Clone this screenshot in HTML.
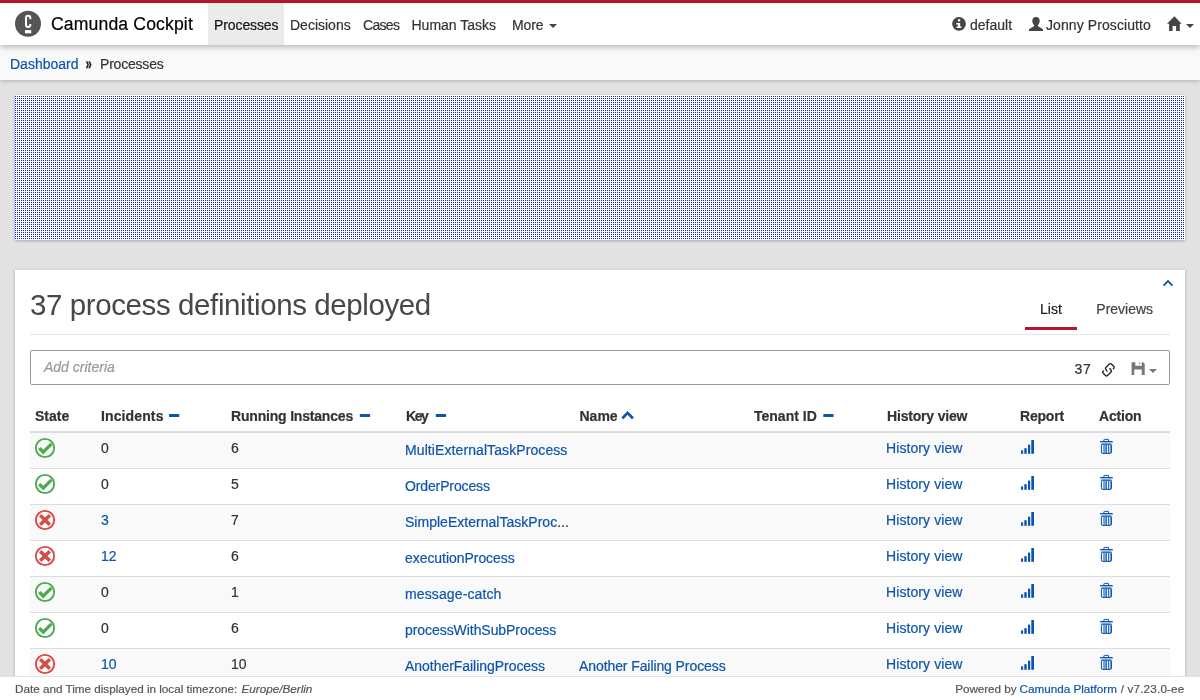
<!DOCTYPE html>
<html lang="en">
<head>
<meta charset="utf-8">
<title>Camunda Cockpit | Processes</title>
<style>
*{box-sizing:border-box}
html,body{margin:0;padding:0}
body{-webkit-text-stroke:.2px;will-change:transform;width:1200px;height:700px;overflow:hidden;position:relative;background:#e2e2e2;
 font-family:"Liberation Sans",sans-serif;font-size:14px;line-height:20px;color:#333}
a{color:#0d55ac;text-decoration:none}
/* header */
#hdr{position:absolute;left:0;top:0;width:1200px;height:45px;background:#fff;border-top:3px solid #b5152b;
 box-shadow:0 2px 6px rgba(0,0,0,.28);z-index:5}
#hicons{position:absolute;left:0;top:-3px}
#brand{position:absolute;left:51px;top:0;height:42px;line-height:42px;font-size:17.6px;letter-spacing:.14px;color:#000;white-space:nowrap}
.nav{position:absolute;top:0;height:42px;line-height:44px;color:#333;white-space:nowrap}
.nav.on{background:#ebebeb;color:#111}
/* breadcrumb */
#crumb{position:absolute;left:0;top:45px;width:1200px;height:35px;background:#f9f9f9;
 box-shadow:0 1px 4px rgba(0,0,0,.22);z-index:4}
#crumb span,#crumb a{position:absolute;top:0;line-height:39px;white-space:nowrap}
/* dotted box */
#dots{position:absolute;left:15px;top:95px;width:1170px;height:145px;background:
 linear-gradient(90deg,transparent 50%,#fff 50%) 0 0/2px 2px,
 linear-gradient(180deg,#fff 50%,transparent 50%) 0 0/2px 2px,
 #0a1eff;
 box-shadow:0 1px 3px rgba(0,0,0,.25)}
/* panel */
#panel{position:absolute;left:15px;top:270px;width:1170px;height:440px;background:#fff;
 box-shadow:0 1px 3px rgba(0,0,0,.25)}
h1{position:absolute;left:15px;top:13px;margin:0;font-weight:normal;font-size:29.5px;line-height:44px;letter-spacing:-.4px;color:#484848;-webkit-text-stroke:0;white-space:nowrap}
#hr{position:absolute;left:15px;top:64px;width:1140px;height:1px;background:#e6e6e6}
.tab{position:absolute;top:27px;line-height:24px;white-space:nowrap}
#tabline{position:absolute;left:1010px;top:57px;width:52px;height:3px;background:#b5152b}
#search{position:absolute;left:15px;top:80px;width:1140px;height:35px;border:1px solid #999;border-radius:2px;background:#fff}
#search .ph{position:absolute;left:13px;top:0;line-height:32px;font-style:italic;color:#999;white-space:nowrap}
#search .cnt{position:absolute;left:1043.5px;top:1px;line-height:34px;letter-spacing:.8px;color:#333}
table{position:absolute;left:15px;top:128px;width:1140px;border-collapse:separate;border-spacing:0;table-layout:fixed}
th{height:35px;padding:8px 0 0 5px;text-align:left;font-weight:bold;color:#333;border-bottom:2px solid #ddd;white-space:nowrap;vertical-align:top;line-height:20px}
td{height:36px;padding:5px 0 0 5px;border-top:1px solid #ddd;vertical-align:top;line-height:20px;white-space:nowrap;overflow:hidden;position:relative}
tbody tr:first-child td{border-top:0;height:35px}
tbody tr:nth-child(odd) td{background:#f9f9f9}
td.k{padding-top:7px}
td.h{letter-spacing:.09px}
#picons{position:absolute;left:0;top:0;z-index:2;pointer-events:none}
/* footer */
#ftr{position:absolute;left:0;top:676px;width:1200px;height:24px;background:#fff;border-top:1px solid #e4e4e4;z-index:6;font-size:11.7px;color:#555}
#ftr span{position:absolute;top:0;line-height:23px;white-space:nowrap}
</style>
</head>
<body>

<div id="hdr">
  <svg id="hicons" width="1200" height="45" viewBox="0 0 1200 45">
    <circle cx="28" cy="23.7" r="13" fill="#555"/>
    <path d="M30.3 19.3V17.7Q30.3 15.7 28.15 15.7Q26 15.7 26 17.7V25.1Q26 27.1 28.15 27.1Q30.3 27.1 30.3 25.1V23.9" fill="none" stroke="#fff" stroke-width="2"/>
    <rect x="25" y="30.1" width="6.3" height="3.2" fill="#fff"/>
    <g fill="#444">
      <circle cx="959" cy="23.8" r="6.85"/>
      <path d="M1036 16.9c2.3 0 3.7 1.6 3.7 3.9 0 1.9-.8 3.6-1.9 4.4v.9l5.2 3.1v1.8h-14v-1.8l5.2-3.1v-.9c-1.1-.8-1.9-2.5-1.9-4.4 0-2.3 1.4-3.9 3.7-3.9z"/>
      <path d="M1174.4 16.3l7.2 7.4h-1.8v7.2h-3.7v-5h-3.5v5h-3.5v-7.2h-2.1z"/>
      <path d="M549 24h8l-4 4z"/>
      <path d="M1186 24h8l-4 4z"/>
    </g>
    <g fill="#fff">
      <rect x="957.9" y="19.2" width="2.3" height="2.2"/>
      <path d="M956.3 23.1h3.9v3.5h1.2v1.5h-4.8v-1.5h1.3v-2h-1.6z"/>
    </g>
  </svg>
  <div id="brand">Camunda Cockpit</div>
  <div class="nav on" style="left:208px;width:76px;padding-left:6px;letter-spacing:-.1px">Processes</div>
  <div class="nav" style="left:290px">Decisions</div>
  <div class="nav" style="left:363px;letter-spacing:-.7px">Cases</div>
  <div class="nav" style="left:411.5px">Human Tasks</div>
  <div class="nav" style="left:512px;letter-spacing:-.15px">More</div>
  <div class="nav" style="left:970px">default</div>
  <div class="nav" style="left:1046px;letter-spacing:.09px">Jonny Prosciutto</div>
</div>

<div id="crumb">
  <a style="left:10px">Dashboard</a><span style="left:85.3px;font-size:13px;font-weight:bold;color:#111;top:-1.2px;transform:scale(.88,1.3)">»</span><span style="left:100px;letter-spacing:-.2px">Processes</span>
</div>

<div id="dots"></div>

<div id="panel">
  <svg id="picons" width="1170" height="430" viewBox="15 270 1170 430">
    <defs>
      <g id="i-ok"><circle cx="45" cy="448" r="9.15" fill="none" stroke="#4cab50" stroke-width="1.9"/><path d="M38.1 449.3l2.3-2.3 2.9 2.8 7-7 2.3 2.3-9.3 9.3z" fill="#4cab50"/></g>
      <g id="i-no"><circle cx="45" cy="448" r="9.15" fill="none" stroke="#d64a48" stroke-width="1.9"/><path d="M40.2 443.2l9.6 9.6M49.8 443.2l-9.6 9.6" stroke="#d64a48" stroke-width="3.4" fill="none"/></g>
      <g id="i-sig" fill="#0d55ac"><rect x="1021" y="450.4" width="2.1" height="3.4"/><rect x="1024.3" y="448.2" width="2.4" height="5.6"/><rect x="1028" y="444.6" width="2.2" height="9.2"/><rect x="1031.3" y="440" width="2.7" height="13.8"/></g>
      <g id="i-del"><path d="M1103.9 441v-1.1q0-.5.5-.5h3.7q.5 0 .5.5v1.1" fill="none" stroke="#0d55ac" stroke-width="1"/><rect x="1100" y="440.9" width="12.9" height="1.4" rx=".5" fill="#0d55ac"/><rect x="1100.6" y="442.3" width="11.7" height="1.2" fill="#8fb4de"/><rect x="1101.4" y="444.1" width="10.1" height="9.3" rx="1.2" fill="#6f9fd6" stroke="#0d55ac" stroke-width="1"/><rect x="1102.1" y="445" width="1" height="7.6" fill="#fff"/><rect x="1106.8" y="445" width="1.3" height="7.6" fill="#fff"/><rect x="1109" y="445" width=".7" height="7.6" fill="#e8f0fa"/><rect x="1106" y="444.6" width=".7" height="8.4" fill="#0d55ac"/><rect x="1108.1" y="444.6" width=".7" height="8.4" fill="#0d55ac"/></g>
    </defs>
    <path d="M1163.5 285.7l4.5-4.6 4.5 4.6" fill="none" stroke="#0d55ac" stroke-width="1.8"/>
    <g fill="#0d55ac">
      <rect x="169" y="414" width="10.3" height="3.1" rx=".6"/><rect x="359.8" y="414" width="10.3" height="3.1" rx=".6"/><rect x="435.8" y="414" width="10.3" height="3.1" rx=".6"/><rect x="823.3" y="414" width="10.3" height="3.1" rx=".6"/>
      <path d="M627.55 410.9l6.45 6.5-2.2 1.9-4.25-4.5-4.15 4.5-2.1-1.9z"/>
    </g>
    <g fill="none" stroke="#222" stroke-width="1.35" stroke-linecap="round" stroke-linejoin="round">
      <path id="lnk" d="M1107 371.2L1105.6 368.9Q1105.1 368.2 1105.8 367.6L1109.4 364.1Q1110.4 363.1 1111.4 364.1L1113.9 366.5Q1114.6 367.2 1114.1 367.9L1113.4 368.7"/>
      <use href="#lnk" transform="rotate(180 1108.45 369.8)"/>
    </g>
    <g fill="#777">
      <path d="M1131.6 362.2h3.7v3.5h6.4v-3.5h1.4l1.6 1.6v11.1h-3v-5.4h-7.5v5.4h-2.6z"/>
      <rect x="1139.2" y="362.3" width=".9" height="1.8"/>
      <path d="M1149 369h8l-4 4z"/>
    </g>
    <use href="#i-ok" y="0"/><use href="#i-sig" y="0"/><use href="#i-del" y="0"/>
    <use href="#i-ok" y="36"/><use href="#i-sig" y="36"/><use href="#i-del" y="36"/>
    <use href="#i-no" y="72"/><use href="#i-sig" y="72"/><use href="#i-del" y="72"/>
    <use href="#i-no" y="108"/><use href="#i-sig" y="108"/><use href="#i-del" y="108"/>
    <use href="#i-ok" y="144"/><use href="#i-sig" y="144"/><use href="#i-del" y="144"/>
    <use href="#i-ok" y="180"/><use href="#i-sig" y="180"/><use href="#i-del" y="180"/>
    <use href="#i-no" y="216"/><use href="#i-sig" y="216"/><use href="#i-del" y="216"/>
  </svg>
  <h1>37 process definitions deployed</h1>
  <span class="tab" style="left:1025px;color:#1a1a1a">List</span>
  <span class="tab" style="left:1081.3px;color:#444">Previews</span>
  <div id="tabline"></div>
  <div id="hr"></div>
  <div id="search"><span class="ph">Add criteria</span><span class="cnt">37</span></div>

  <table>
    <colgroup><col style="width:66px"><col style="width:130px"><col style="width:174px"><col style="width:174px"><col style="width:174px"><col style="width:133px"><col style="width:134px"><col style="width:79px"><col style="width:76px"></colgroup>
    <thead><tr>
      <th>State</th><th style="letter-spacing:.12px">Incidents</th><th style="letter-spacing:-.19px">Running Instances</th><th style="letter-spacing:-1.4px;padding-left:6px">Key</th><th style="padding-left:5.5px">Name</th><th style="padding-left:6px">Tenant ID</th><th style="letter-spacing:-.18px;padding-left:6px">History view</th><th style="letter-spacing:-.2px">Report</th><th style="letter-spacing:-.2px">Action</th>
    </tr></thead>
    <tbody>
      <tr><td></td><td>0</td><td>6</td><td class="k"><a style="letter-spacing:.09px">MultiExternalTaskProcess</a></td><td class="k"></td><td></td><td class="h"><a>History view</a></td><td></td><td></td></tr>
      <tr><td></td><td>0</td><td>5</td><td class="k"><a style="letter-spacing:-.13px">OrderProcess</a></td><td class="k"></td><td></td><td class="h"><a>History view</a></td><td></td><td></td></tr>
      <tr><td></td><td><a>3</a></td><td>7</td><td class="k"><a style="letter-spacing:.02px">SimpleExternalTaskProc</a>...</td><td class="k"></td><td></td><td class="h"><a>History view</a></td><td></td><td></td></tr>
      <tr><td></td><td><a>12</a></td><td>6</td><td class="k"><a style="letter-spacing:-.05px">executionProcess</a></td><td class="k"></td><td></td><td class="h"><a>History view</a></td><td></td><td></td></tr>
      <tr><td></td><td>0</td><td>1</td><td class="k"><a style="letter-spacing:.12px">message-catch</a></td><td class="k"></td><td></td><td class="h"><a>History view</a></td><td></td><td></td></tr>
      <tr><td></td><td>0</td><td>6</td><td class="k"><a style="letter-spacing:-.06px">processWithSubProcess</a></td><td class="k"></td><td></td><td class="h"><a>History view</a></td><td></td><td></td></tr>
      <tr><td></td><td><a>10</a></td><td>10</td><td class="k"><a style="letter-spacing:-.04px">AnotherFailingProcess</a></td><td class="k"><a style="letter-spacing:-.09px">Another Failing Process</a></td><td></td><td class="h"><a>History view</a></td><td></td><td></td></tr>
    </tbody>
  </table>
</div>

<div id="ftr">
  <span style="left:15px">Date and Time displayed in local timezone: <i style="margin-left:1.1px">Europe/Berlin</i></span>
  <span style="left:955.2px;letter-spacing:-.04px">Powered by</span>
  <span style="left:1019.5px;letter-spacing:0"><a>Camunda Platform</a></span>
  <span style="left:1120.7px;letter-spacing:.17px">/ v7.23.0-ee</span>
</div>

</body>
</html>
